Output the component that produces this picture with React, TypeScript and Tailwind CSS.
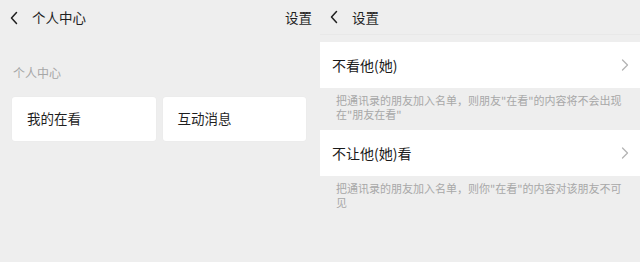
import React from 'react';

const font = { fontFamily: '"Noto Sans CJK SC", "Noto Sans", sans-serif' };

const BackIcon = () => (
  <svg width="10" height="14" viewBox="0 0 10 14" fill="none" className="shrink-0">
    <path d="M7.5 1.5 L2.5 7 L7.5 12.5" stroke="#1f1f1f" strokeWidth="1.5" strokeLinecap="round" strokeLinejoin="round" />
  </svg>
);

const ChevronRight = () => (
  <svg width="8" height="12" viewBox="0 0 8 12" fill="none">
    <path d="M1.5 1 L6.5 6 L1.5 11" stroke="#b4b4b4" strokeWidth="1.3" strokeLinecap="round" strokeLinejoin="round" />
  </svg>
);

const PersonalCenter = () => (
  <div className="w-[320px] h-full flex flex-col">
    <div className="h-[35px] flex items-center pl-[9px] pr-[8px]">
      <BackIcon />
      <span className="ml-[13px] text-[13.5px] text-[#1f1f1f]">个人中心</span>
      <span className="ml-auto text-[13.5px] text-[#1f1f1f]">设置</span>
    </div>
    <div className="pl-[13px] mt-[31px] text-[12px] leading-[14px] text-[#a6a6a6]">个人中心</div>
    <div className="flex gap-[7px] pl-[12px] pr-[14px] mt-[17px]">
      <div className="flex-1 h-[44px] bg-white rounded-[3px] shadow-[0_0_2px_rgba(0,0,0,0.04)] flex items-center pl-[15px] pb-[2px] text-[13.5px] text-[#1f1f1f]">
        我的在看
      </div>
      <div className="flex-1 h-[44px] bg-white rounded-[3px] shadow-[0_0_2px_rgba(0,0,0,0.04)] flex items-center pl-[15px] pb-[2px] text-[13.5px] text-[#1f1f1f]">
        互动消息
      </div>
    </div>
  </div>
);

const SettingRow = ({ title, lines }: { title: string; lines: string[] }) => (
  <div>
    <div className="h-[46px] bg-white flex items-center pl-[12px] pr-[11px]">
      <span className="text-[14px] text-[#1a1a1a]">{title}</span>
      <span className="ml-auto flex items-center">
        <ChevronRight />
      </span>
    </div>
    <div className="pl-[16px] pt-[5px] pb-[9px] text-[11px] leading-[14px] text-[#a8a8a8]">
      {lines.map((l) => (
        <div key={l} className="whitespace-nowrap">{l}</div>
      ))}
    </div>
  </div>
);

const Settings = () => (
  <div className="w-[320px] h-full flex flex-col">
    <div className="h-[35px] flex items-center pl-[9px] border-b border-[#e8e8e8]">
      <BackIcon />
      <span className="ml-[13px] text-[13.5px] text-[#1f1f1f]">设置</span>
    </div>
    <div className="mt-[7px]">
      <SettingRow title="不看他(她)" lines={['把通讯录的朋友加入名单，则朋友"在看"的内容将不会出现', '在"朋友在看"']} />
      <SettingRow title="不让他(她)看" lines={['把通讯录的朋友加入名单，则你"在看"的内容对该朋友不可', '见']} />
    </div>
  </div>
);

export default function App() {
  return (
    <div className="w-[640px] h-[262px] bg-[#eeeeee] flex overflow-hidden" style={font}>
      <PersonalCenter />
      <Settings />
    </div>
  );
}
